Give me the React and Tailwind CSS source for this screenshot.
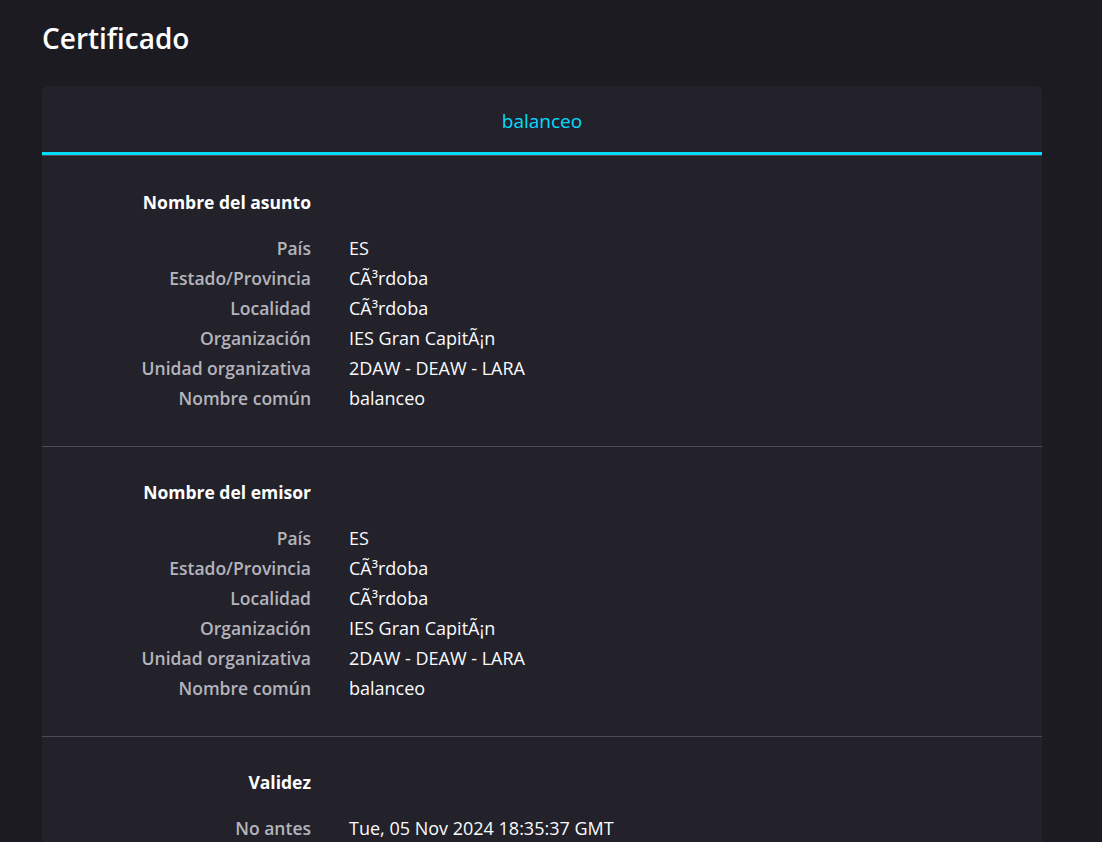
import React from 'react';

const sections = [
  {
    title: 'Nombre del asunto',
    rows: [
      ['País', 'ES'],
      ['Estado/Provincia', 'CÃ³rdoba'],
      ['Localidad', 'CÃ³rdoba'],
      ['Organización', 'IES Gran CapitÃ¡n'],
      ['Unidad organizativa', '2DAW - DEAW - LARA'],
      ['Nombre común', 'balanceo'],
    ],
  },
  {
    title: 'Nombre del emisor',
    rows: [
      ['País', 'ES'],
      ['Estado/Provincia', 'CÃ³rdoba'],
      ['Localidad', 'CÃ³rdoba'],
      ['Organización', 'IES Gran CapitÃ¡n'],
      ['Unidad organizativa', '2DAW - DEAW - LARA'],
      ['Nombre común', 'balanceo'],
    ],
  },
  {
    title: 'Validez',
    rows: [['No antes', 'Tue, 05 Nov 2024 18:35:37 GMT']],
  },
];

const Section = ({ section, last }) => (
  <div className={`pt-[30px] pb-[33px] ${last ? '' : 'border-b border-[#4e4d55]'}`}>
    <div className="grid grid-cols-[269px_1fr] gap-x-[38px] leading-[30px]">
      <div className="text-right text-[17.5px] font-bold text-white mb-[16px]">{section.title}</div>
      <div className="mb-[16px]"></div>
      {section.rows.map(([label, value], i) => (
        <React.Fragment key={i}>
          <div className="text-right text-[17.5px] font-semibold text-[#b4b4bc]">{label}</div>
          <div className="text-[18px] text-[#fbfbfe]">{value}</div>
        </React.Fragment>
      ))}
    </div>
  </div>
);

export default function App() {
  return (
    <div className="min-h-screen bg-[#1c1b22] font-['Open_Sans',sans-serif] text-[16px] text-[#fbfbfe]">
      <div className="px-[42px] pt-[21px] w-[1084px]">
        <h1 className="text-[28px] leading-[34px] font-semibold text-white">Certificado</h1>
        <div className="mt-[31px] bg-[#23222b] rounded-t-[6px] overflow-hidden">
          <div className="h-[70px] border-b border-[#4e4d55]">
            <div className="h-[69px] border-b-[3px] border-[#00ddff] flex items-center justify-center pt-[4px] text-[19px] text-[#00ddff]">
              balanceo
            </div>
          </div>
          <div className="pt-[1px]">
            {sections.map((s, i) => (
              <Section key={i} section={s} last={i === sections.length - 1} />
            ))}
          </div>
        </div>
      </div>
    </div>
  );
}
